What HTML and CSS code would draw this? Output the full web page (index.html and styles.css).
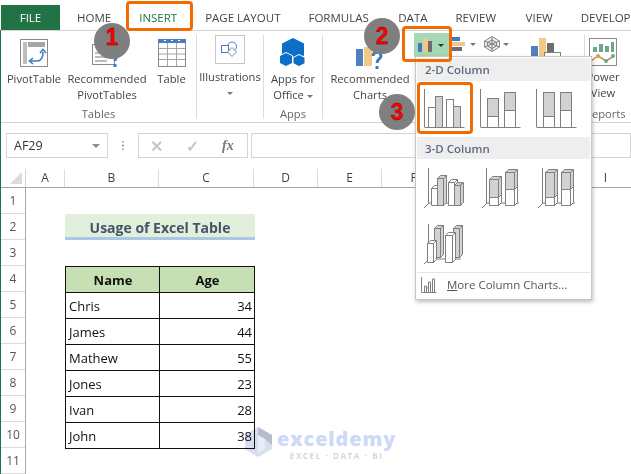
FILE: index.html
```html
<!DOCTYPE html>
<html lang="en">
<head>
    <meta charset="UTF-8">
    <title>Usage of Excel Table</title>
    <link rel="stylesheet" href="styles.css">
</head>
<body>
    <div class = "app_window">
        <nav class = "bar_tabs">
            <span class = "tab_file">FILE</span>
            <span class = "tab_item">HOME</span>
            <span class = "tab_item tab_active">INSERT</span>
            <span class = "tab_item">PAGE LAYOUT</span>
            <span class = "tab_item">FORMULAS</span>
            <span class = "tab_item tab_shift">DATA</span>
            <span class = "tab_item">REVIEW</span>
            <span class = "tab_item tab_shift">VIEW</span>
            <span class = "tab_item">DEVELOPER</span>
        </nav>

        <section class = "ribbon_main">
            <div class = "group_ribbon group_tables">
                <div class = "group_items">
                    <div class = "item_ribbon item_pivot">
                        <svg class = "icon_large" width="30" height="30" viewBox="0 0 30 30">
                            <rect x="1.500" y="1.500" width="27" height="27" fill="#fff" stroke="#8a8a8a"/>
                            <rect x="9" y="4" width="17" height="5" fill="#a6a6a6"/>
                            <rect x="4" y="4" width="4" height="22" fill="#bdbdbd"/>
                            <path d="M11 23h7c4 0 6-3 6-9" fill="none" stroke="#3f7cbf" stroke-width="1.600"/>
                            <path d="M21 15l3-3.500 3 3.500M14 20l-3.500 3 3.500 3" fill="none" stroke="#3f7cbf" stroke-width="1.600"/>
                        </svg>
                        <span>PivotTable</span>
                    </div>
                    <div class = "item_ribbon item_recommended">
                        <svg class = "icon_large" width="32" height="32" viewBox="0 0 32 32">
                            <rect x="1.500" y="6.500" width="22" height="20" fill="#fff" stroke="#8a8a8a"/>
                            <path d="M4 15h16M4 19h14M4 23h12" stroke="#a6a6a6" stroke-width="1.500"/>
                            <path d="M19 15c0-6 9-6 9 0 0 3-4 3-4 8" fill="none" stroke="#3f7cbf" stroke-width="3"/>
                            <rect x="22.500" y="26" width="3" height="3" fill="#3f7cbf"/>
                        </svg>
                        <span>Recommended<br>PivotTables</span>
                    </div>
                    <div class = "item_ribbon item_table">
                        <svg class = "icon_large" width="30" height="30" viewBox="0 0 30 30">
                            <rect x="1.500" y="1.500" width="27" height="27" fill="#fff" stroke="#8a8a8a"/>
                            <rect x="1" y="1" width="28" height="4" fill="#4a7ebb"/>
                            <path d="M7 2.500h2M14 2.500h2M21 2.500h2" stroke="#fff"/>
                            <path d="M10.500 5v23M19.500 5v23M2 10.500h26M2 16h26M2 21.500h26" stroke="#a6a6a6"/>
                        </svg>
                        <span>Table</span>
                    </div>
                </div>
                <div class = "label_group">Tables</div>
            </div>

            <div class = "group_ribbon group_illustrations">
                <div class = "group_items">
                    <div class = "item_ribbon item_illustrations">
                        <span class = "box_illustrations">
                            <svg width="20" height="20" viewBox="0 0 20 20">
                                <circle cx="12" cy="6.500" r="4.500" fill="#fff" stroke="#3f7cbf"/>
                                <rect x="1.500" y="5.500" width="7" height="7" fill="#fff" stroke="#3f7cbf"/>
                                <path d="M12 7.500l4.500 4.500-4.500 4.500-4.500-4.500z" fill="#fff" stroke="#8a8a8a"/>
                            </svg>
                        </span>
                        <span>Illustrations</span>
                        <i class = "arrow_down arrow_block"></i>
                    </div>
                </div>
            </div>

            <div class = "group_ribbon group_apps">
                <div class = "group_items">
                    <div class = "item_ribbon item_apps">
                        <svg class = "icon_large" width="28" height="30" viewBox="0 0 28 30">
                            <path d="M14 0l11 5.500v12l-11 5.500-11-5.500v-12z" fill="#0b6fc9"/>
                            <path d="M7 14.500l6.500 3.200v7.600l-6.500 3.200-6.500-3.200v-7.600z" fill="#0b6fc9" stroke="#fff"/>
                            <path d="M20 16.500l6 3v6l-6 3-6-3v-6z" fill="#0b6fc9" stroke="#fff"/>
                        </svg>
                        <span>Apps for<br>Office <i class = "arrow_down"></i></span>
                    </div>
                </div>
                <div class = "label_group">Apps</div>
            </div>

            <div class = "group_ribbon group_charts">
                <div class = "group_items">
                    <div class = "item_ribbon item_charts">
                        <svg class = "icon_large icon_charts" width="30" height="24" viewBox="0 0 30 24">
                            <rect x="1" y="2" width="7" height="17" fill="#4f81bd"/>
                            <rect x="9" y="0" width="8" height="19" fill="#f0c987"/>
                            <path d="M18 9c0-5 8-5 8 0 0 3-4 3-4 7" fill="none" stroke="#3f7cbf" stroke-width="3"/>
                            <rect x="20.500" y="19" width="3" height="3" fill="#3f7cbf"/>
                        </svg>
                        <span>Recommended<br>Charts</span>
                    </div>
                    <div class = "strip_charts">
                        <span class = "btn_column">
                            <svg width="15" height="14" viewBox="0 0 15 14">
                                <rect x="0" y="5" width="4" height="9" fill="#3f7cbf"/>
                                <rect x="5" y="0" width="5" height="14" fill="#f0c987"/>
                                <rect x="10" y="3" width="4" height="11" fill="#6d6d6d"/>
                            </svg>
                            <i class = "arrow_down arrow_dark"></i>
                        </span>
                        <span class = "btn_small">
                            <svg width="14" height="14" viewBox="0 0 14 14">
                                <rect x="0" y="0" width="8" height="4" fill="#3f7cbf"/>
                                <rect x="0" y="5" width="13" height="4" fill="#f0c987"/>
                                <rect x="0" y="10" width="10" height="4" fill="#6d6d6d"/>
                            </svg>
                            <i class = "arrow_down"></i>
                        </span>
                        <span class = "btn_small btn_radar">
                            <svg width="18" height="16" viewBox="0 0 18 16">
                                <path d="M9 .500l7.500 4.500v6L9 15.500 1.500 11V5z" fill="#eeeeee" stroke="#8a8a8a"/>
                                <path d="M9 4l4.500 2.500v3.500L9 12.500 4.500 10V6.500zM9 .500v15M1.500 5l15 6M16.500 5l-15 6" fill="none" stroke="#7f7f7f"/>
                            </svg>
                            <i class = "arrow_down"></i>
                        </span>
                        <svg class = "icon_combo" width="30" height="26" viewBox="0 0 30 26">
                            <rect x="0" y="8" width="7" height="17" fill="#4f81bd"/>
                            <rect x="8" y="0" width="7" height="25" fill="#f0c987"/>
                            <rect x="16" y="5" width="7" height="20" fill="#6d6d6d"/>
                            <rect x="13.500" y="14.500" width="16" height="11" fill="#fff" stroke="#7f7f7f"/>
                        </svg>
                    </div>
                </div>
            </div>

            <div class = "group_ribbon group_reports">
                <div class = "group_items">
                    <div class = "item_ribbon item_power">
                        <svg class = "icon_large" width="28" height="28" viewBox="0 0 28 28">
                            <rect x="0.500" y="0.500" width="27" height="27" fill="#fff" stroke="#8a8a8a"/>
                            <rect x="4" y="9" width="4" height="5" fill="#6aa889"/>
                            <rect x="10" y="6" width="4" height="8" fill="#6aa889"/>
                            <rect x="16" y="8" width="4" height="6" fill="#6aa889"/>
                            <rect x="22" y="4" width="3" height="10" fill="#6aa889"/>
                            <path d="M2 23l7-5 8 5 8-5" fill="none" stroke="#d98b4a" stroke-width="1.500"/>
                            <circle cx="9" cy="18" r="2" fill="#e09a5a"/>
                            <circle cx="17" cy="23" r="2" fill="#6aa889"/>
                            <circle cx="24" cy="18" r="2" fill="#6aa889"/>
                        </svg>
                        <span>Power<br>View</span>
                    </div>
                </div>
                <div class = "label_group">Reports</div>
            </div>
        </section>

        <section class = "bar_formula">
            <div class = "box_name">
                <span>AF29</span>
                <i class = "arrow_down arrow_name"></i>
            </div>
            <div class = "dots_formula"></div>
            <div class = "box_buttons">
                <span class = "mark_cancel">&#10005;</span>
                <span class = "mark_enter">&#10003;</span>
                <span class = "mark_fx">fx</span>
            </div>
            <div class = "box_input"></div>
        </section>

        <section class = "sheet_main">
            <div class = "head_columns">
                <div class = "cell_corner"><i class = "triangle_corner"></i></div>
                <div class = "head_col col_a">A</div>
                <div class = "head_col col_b">B</div>
                <div class = "head_col col_c">C</div>
                <div class = "head_col">D</div>
                <div class = "head_col">E</div>
                <div class = "head_col">F</div>
                <div class = "head_col">G</div>
                <div class = "head_col">H</div>
                <div class = "head_col">I</div>
            </div>
            <div class = "body_sheet">
                <div class = "head_rows">
                    <div class = "head_row">1</div>
                    <div class = "head_row">2</div>
                    <div class = "head_row">3</div>
                    <div class = "head_row">4</div>
                    <div class = "head_row">5</div>
                    <div class = "head_row">6</div>
                    <div class = "head_row">7</div>
                    <div class = "head_row">8</div>
                    <div class = "head_row">9</div>
                    <div class = "head_row">10</div>
                    <div class = "head_row">11</div>
                </div>
                <div class = "content_sheet">
                    <div class = "title_sheet">Usage of Excel Table</div>
                    <table class = "table_data">
                        <tr><th>Name</th><th>Age</th></tr>
                        <tr><td>Chris</td><td class = "cell_number">34</td></tr>
                        <tr><td>James</td><td class = "cell_number">44</td></tr>
                        <tr><td>Mathew</td><td class = "cell_number">55</td></tr>
                        <tr><td>Jones</td><td class = "cell_number">23</td></tr>
                        <tr><td>Ivan</td><td class = "cell_number">28</td></tr>
                        <tr><td>John</td><td class = "cell_number">38</td></tr>
                    </table>
                </div>
            </div>
        </section>

        <div class = "menu_charts">
            <div class = "head_menu">2-D Column</div>
            <div class = "grid_charts">
                <svg width="56" height="52" viewBox="0 0 56 52">
                    <path class = "line_axis" d="M7.500 7v38M7.500 45.500h40"/>
                    <rect class = "bar_white" x="11.500" y="25.500" width="7" height="20"/>
                    <rect class = "bar_grey" x="18.500" y="14.500" width="7" height="31"/>
                    <rect class = "bar_white" x="29.500" y="17.500" width="7" height="28"/>
                    <rect class = "bar_grey" x="36.500" y="24.500" width="7" height="21"/>
                </svg>
                <svg width="56" height="52" viewBox="0 0 56 52">
                    <path class = "line_axis" d="M7.500 7v38M7.500 45.500h40"/>
                    <rect class = "bar_grey" x="14.500" y="16.500" width="11" height="18"/>
                    <rect class = "bar_white" x="14.500" y="34.500" width="11" height="11"/>
                    <rect class = "bar_grey" x="31.500" y="10.500" width="11" height="18"/>
                    <rect class = "bar_white" x="31.500" y="28.500" width="11" height="17"/>
                </svg>
                <svg width="56" height="52" viewBox="0 0 56 52">
                    <path class = "line_axis" d="M7.500 7v38M7.500 45.500h40"/>
                    <rect class = "bar_grey" x="14.500" y="10.500" width="11" height="24"/>
                    <rect class = "bar_white" x="14.500" y="34.500" width="11" height="11"/>
                    <rect class = "bar_grey" x="31.500" y="10.500" width="11" height="18"/>
                    <rect class = "bar_white" x="31.500" y="28.500" width="11" height="17"/>
                </svg>
            </div>
            <div class = "head_menu head_second">3-D Column</div>
            <div class = "grid_charts grid_charts_3d">
                <svg width="56" height="56" viewBox="0 0 56 56">
                    <path class = "line_axis" d="M11.500 8v36M7 48l5-5h32"/>
                    <path class = "bar_white" d="M14.500 28.500h6v17h-6zM14.500 28.500l3-3h6l-3 3zM20.500 28.500l3-3v17l-3 3z"/>
                    <path class = "bar_grey" d="M20.500 18.500h6v27h-6zM20.500 18.500l3-3h6l-3 3zM26.500 18.500l3-3v27l-3 3z"/>
                    <path class = "bar_white" d="M31.500 22.500h6v23h-6zM31.500 22.500l3-3h6l-3 3zM37.500 22.500l3-3v23l-3 3z"/>
                    <path class = "bar_grey" d="M37.500 25.500h6v20h-6zM37.500 25.500l3-3h5l-2 3zM43.500 25.500l3-3v20l-3 3z"/>
                </svg>
                <svg width="56" height="56" viewBox="0 0 56 56">
                    <path class = "line_axis" d="M13.500 8v36M9 48l5-5h32"/>
                    <path class = "bar_grey" d="M16.500 19.500h9v18h-9zM16.500 19.500l3-3h9l-3 3zM25.500 19.500l3-3v18l-3 3z"/>
                    <path class = "bar_white" d="M16.500 37.500h9v8h-9zM25.500 37.500l3-3v8l-3 3z"/>
                    <path class = "bar_grey" d="M32.500 12.500h9v17h-9zM32.500 12.500l3-3h9l-3 3zM41.500 12.500l3-3v17l-3 3z"/>
                    <path class = "bar_white" d="M32.500 29.500h9v16h-9zM41.500 29.500l3-3v16l-3 3z"/>
                </svg>
                <svg width="56" height="56" viewBox="0 0 56 56">
                    <path class = "line_axis" d="M13.500 8v36M9 48l5-5h32"/>
                    <path class = "bar_grey" d="M16.500 12.500h9v25h-9zM16.500 12.500l3-3h9l-3 3zM25.500 12.500l3-3v25l-3 3z"/>
                    <path class = "bar_white" d="M16.500 37.500h9v8h-9zM25.500 37.500l3-3v8l-3 3z"/>
                    <path class = "bar_grey" d="M32.500 12.500h9v17h-9zM32.500 12.500l3-3h9l-3 3zM41.500 12.500l3-3v17l-3 3z"/>
                    <path class = "bar_white" d="M32.500 29.500h9v16h-9zM41.500 29.500l3-3v16l-3 3z"/>
                </svg>
                <svg width="56" height="56" viewBox="0 0 56 56">
                    <path class = "line_axis" d="M11.500 8v36M7 48l5-5h32"/>
                    <path class = "bar_grey" d="M17.500 12.500h6v29h-6zM17.500 12.500l3-3h6l-3 3zM23.500 12.500l3-3v29l-3 3z"/>
                    <path class = "bar_grey" d="M36.500 12.500h6v29h-6zM36.500 12.500l3-3h6l-3 3zM42.500 12.500l3-3v29l-3 3z"/>
                    <path class = "bar_white" d="M10.500 27.500h6v19h-6zM10.500 27.500l3-3h6l-3 3zM16.500 27.500l3-3v19l-3 3z"/>
                    <path class = "bar_white" d="M28.500 19.500h7v27h-7zM28.500 19.500l3-3h7l-3 3zM35.500 19.500l3-3v27l-3 3z"/>
                </svg>
            </div>
            <div class = "foot_menu">
                <svg width="17" height="16" viewBox="0 0 17 16">
                    <path d="M1.500 0v15.500h15M4.500 15V9h2v6M8.500 15V5h2v10M12.500 15V2h2v13M6.500 15v-4h2" fill="none" stroke="#7f7f7f"/>
                </svg>
                <span><u>M</u>ore Column Charts...</span>
            </div>
        </div>

        <div class = "mark_orange mark_insert"></div>
        <div class = "mark_orange mark_column"></div>
        <div class = "mark_orange mark_chart"></div>

        <div class = "badge_step badge_one">1</div>
        <div class = "badge_step badge_two">2</div>
        <div class = "badge_step badge_three">3</div>

        <div class = "logo_watermark">
            <svg width="30" height="32" viewBox="0 0 30 32">
                <path d="M14 1l14 8v14l-14 8-13-8V9z" fill="#d6deef"/>
                <path d="M14 1l14 8v10l-7-6-7-4z" fill="#b6bdcf"/>
                <path d="M14 9l7 4v10l-7 4z" fill="#e9edf6"/>
            </svg>
            <div class = "text_watermark">
                <b>exceldemy</b>
                <span>EXCEL · DATA · BI</span>
            </div>
        </div>
    </div>
</body>
</html>
```

FILE: styles.css
```css
html, body 
{
    margin: 0;
    padding: 0;
    background-color: white;
}

.app_window 
{
    position: relative;
    width: 631px;
    height: 474px;
    overflow: hidden;
    font-family: 'Open Sans', 'Noto Sans', sans-serif;
    font-size: 11.500px;
    color: #444;
    background-color: white;
}

.app_window::before 
{
    content: "";
    position: absolute;
    left: 0;
    top: 30px;
    bottom: 0;
    width: 1px;
    background-color: #217346;
}

.bar_tabs 
{
    display: flex;
    align-items: stretch;
    height: 25px;
    padding-top: 5px;
    white-space: nowrap;
}

.tab_file 
{
    width: 59px;
    margin-left: 1px;
    margin-right: 3px;
    background-color: #217346;
    color: white;
    text-align: center;
    line-height: 25px;
    flex: none;
}

.tab_item 
{
    padding: 0 14px;
    line-height: 25px;
    flex: none;
}

.tab_active { color: #217346; }
.tab_shift { margin-left: 1.500px; }

.ribbon_main 
{
    display: flex;
    height: 87px;
    padding: 4px 0 0 1px;
    border-top: 1px solid #d4d4d4;
    border-bottom: 1px solid #d4d4d4;
    font-size: 11.200px;
}

.group_ribbon 
{
    display: flex;
    flex-direction: column;
    flex: none;
    height: 84px;
    border-right: 1px solid #dcdcdc;
    box-sizing: border-box;
}

.group_tables { width: 196px; }
.group_illustrations { width: 67px; }
.group_apps { width: 59px; }
.group_charts { width: 262px; }
.group_reports { width: 36px; border-right: none; }

.group_items 
{
    display: flex;
    flex: 1;
}

.label_group 
{
    height: 16px;
    margin-bottom: -3px;
    line-height: 16px;
    text-align: center;
    color: #666;
    white-space: nowrap;
}

.item_ribbon 
{
    display: flex;
    flex-direction: column;
    align-items: center;
    flex: none;
    text-align: center;
    line-height: 16px;
    white-space: nowrap;
}

.icon_large 
{
    display: block;
    margin: 3px 0 3px;
}

.item_pivot { width: 64px; margin-left: 1px; }
.item_recommended { width: 82px; }
.item_table { width: 47px; }
.item_illustrations { width: 66px; }
.item_apps { width: 58px; }
.item_charts { width: 94px; }
.item_power { width: 36px; }

.item_recommended .icon_large { margin-bottom: 1px; }
.icon_charts { margin: 12px 0 0; }

.box_illustrations 
{
    display: flex;
    align-items: center;
    justify-content: center;
    width: 30px;
    height: 29px;
    margin-bottom: 5px;
    border: 1px solid #c6c6c6;
    box-sizing: border-box;
}

.arrow_down 
{
    display: inline-block;
    width: 0;
    height: 0;
    vertical-align: middle;
    border-left: 3px solid transparent;
    border-right: 3px solid transparent;
    border-top: 3px solid #777;
}

.arrow_block { margin-top: 7px; }
.arrow_dark { border-top-color: #333; }

.strip_charts 
{
    display: flex;
    align-items: flex-start;
    gap: 2px;
    margin: -2px 0 0 -3px;
}

.btn_column 
{
    display: flex;
    align-items: center;
    gap: 5px;
    width: 36px;
    height: 24px;
    padding-left: 4px;
    box-sizing: border-box;
    background-color: #a5d8b6;
}

.btn_small 
{
    display: flex;
    align-items: center;
    gap: 4px;
    height: 22px;
}

.btn_radar { margin-left: 5px; gap: 2px; }

.icon_combo 
{
    margin: 5px 0 0 20px;
    flex: none;
}

.bar_formula 
{
    display: flex;
    align-items: stretch;
    height: 25px;
    padding: 10px 0 11px 6px;
}

.box_name 
{
    display: flex;
    align-items: center;
    justify-content: space-between;
    width: 102px;
    padding: 0 7px;
    box-sizing: border-box;
    border: 1px solid #d4d4d4;
    font-size: 12.500px;
    color: #333;
}

.arrow_name 
{
    border-left-width: 4px;
    border-right-width: 4px;
    border-top-width: 4px;
    border-top-color: #8a8a8a;
}

.dots_formula 
{
    width: 30px;
    margin: 8px 0;
    background-image: radial-gradient(circle, #a6a6a6 1px, transparent 1.200px);
    background-size: 30px 4px;
    background-position: center;
    background-repeat: repeat-y;
}

.box_buttons 
{
    display: flex;
    align-items: center;
    width: 110px;
    box-sizing: border-box;
    border: 1px solid #d4d4d4;
    padding-left: 11px;
    color: #c8c8c8;
    font-size: 16px;
    font-weight: bold;
}

.mark_cancel { width: 36px; }
.mark_enter { width: 36px; }

.mark_fx 
{
    font-family: 'Liberation Serif', serif;
    font-style: italic;
    font-weight: bold;
    font-size: 14px;
    color: #777;
}

.box_input 
{
    flex: 1;
    margin-left: 3px;
    border: 1px solid #d4d4d4;
}

.head_columns 
{
    display: flex;
    height: 19px;
    box-sizing: border-box;
    border-bottom: 1px solid #a6a6a6;
}

.cell_corner 
{
    position: relative;
    width: 26px;
    flex: none;
    border-right: 1px solid #d4d4d4;
    box-sizing: border-box;
}

.triangle_corner 
{
    position: absolute;
    right: 3px;
    bottom: 3px;
    width: 0;
    height: 0;
    border-left: 12px solid transparent;
    border-bottom: 12px solid #dcdcdc;
}

.head_col 
{
    width: 64px;
    flex: none;
    border-right: 1px solid #dcdcdc;
    box-sizing: border-box;
    text-align: center;
    line-height: 18px;
    font-size: 12px;
    color: #444;
}

.col_a { width: 39px; }
.col_b { width: 94px; }
.col_c { width: 95px; }

.body_sheet { display: flex; }

.head_rows 
{
    width: 26px;
    flex: none;
    border-left: 1px solid #217346;
    border-right: 1px solid #a6a6a6;
    box-sizing: border-box;
}

.head_row 
{
    height: 26px;
    box-sizing: border-box;
    border-bottom: 1px solid #dcdcdc;
    text-align: center;
    line-height: 26px;
    font-size: 12px;
    color: #555;
}

.content_sheet 
{
    padding: 26px 0 0 39px;
    font-size: 13px;
    color: #111;
}

.title_sheet 
{
    width: 190px;
    height: 26px;
    box-sizing: border-box;
    margin-bottom: 26px;
    background-color: #e2efda;
    border-bottom: 3px solid #a9c8e6;
    text-align: center;
    line-height: 27px;
    font-size: 14px;
    font-weight: 700;
    color: #44546a;
}

.table_data 
{
    border-collapse: collapse;
    table-layout: fixed;
    width: 190px;
}

.table_data th, .table_data td 
{
    height: 26px;
    padding: 0 2px 0 3px;
    box-sizing: border-box;
    border: 1px solid #111;
}

.table_data th 
{
    background-color: #c6e0b4;
    font-weight: 700;
    color: #111;
}

.table_data th:first-child { width: 94px; }
.cell_number { text-align: right; }

.menu_charts 
{
    position: absolute;
    left: 415px;
    top: 56px;
    width: 177px;
    height: 244px;
    box-sizing: border-box;
    padding: 1px;
    background-color: white;
    border: 1px solid #c6c6c6;
    box-shadow: 1px 2px 4px rgba(0,0,0,0.25);
}

.head_menu 
{
    height: 23px;
    line-height: 23px;
    padding-left: 8px;
    background-color: #eeeeee;
    font-size: 11.500px;
    font-weight: 600;
    color: #5d6b80;
}

.head_second { margin-top: 3px; height: 22px; line-height: 23px; }

.grid_charts 
{
    display: grid;
    grid-template-columns: repeat(3, 56px);
    padding-top: 1px;
}

.grid_charts svg { display: block; }

.grid_charts_3d { padding: 1px 0 0; }

.line_axis 
{
    fill: none;
    stroke: #7f7f7f;
}

.bar_white 
{
    fill: white;
    stroke: #7f7f7f;
}

.bar_grey 
{
    fill: #d2d2d2;
    stroke: #7f7f7f;
}

.foot_menu 
{
    display: flex;
    align-items: center;
    gap: 10px;
    height: 23px;
    padding-left: 3px;
    border-top: 1px solid #e4e4e4;
    color: #555;
    font-size: 11.500px;
}

.mark_orange 
{
    position: absolute;
    box-sizing: border-box;
    border: 3px solid #f26b00;
    border-radius: 4px;
}

.mark_insert { left: 126px; top: 1px; width: 67px; height: 30px; }
.mark_column { left: 402px; top: 26px; width: 50px; height: 36px; }
.mark_chart { left: 417px; top: 82px; width: 56px; height: 52px; }

.badge_step 
{
    position: absolute;
    width: 36px;
    height: 36px;
    border-radius: 50%;
    background-color: #7f7f7f;
    color: #f00;
    text-align: center;
    line-height: 36px;
    font-family: 'Liberation Sans', sans-serif;
    font-size: 23px;
    font-weight: bold;
    -webkit-text-stroke: 0.300px #600;
}

.badge_one { left: 94px; top: 23px; line-height: 29px; }
.badge_two { left: 364px; top: 18px; }
.badge_three { left: 379px; top: 94px; }

.logo_watermark 
{
    position: absolute;
    left: 244px;
    top: 426px;
    display: flex;
    gap: 3px;
    mix-blend-mode: multiply;
}

.text_watermark 
{
    display: flex;
    flex-direction: column;
    align-items: center;
}

.text_watermark b 
{
    font-family: 'Open Sans', sans-serif;
    font-size: 20px;
    font-weight: 800;
    line-height: 25px;
    letter-spacing: 0.800px;
    color: #cdd9f5;
}

.text_watermark span 
{
    font-size: 8px;
    line-height: 9px;
    font-weight: 700;
    letter-spacing: 1.600px;
    color: #d6d6d6;
}
```
